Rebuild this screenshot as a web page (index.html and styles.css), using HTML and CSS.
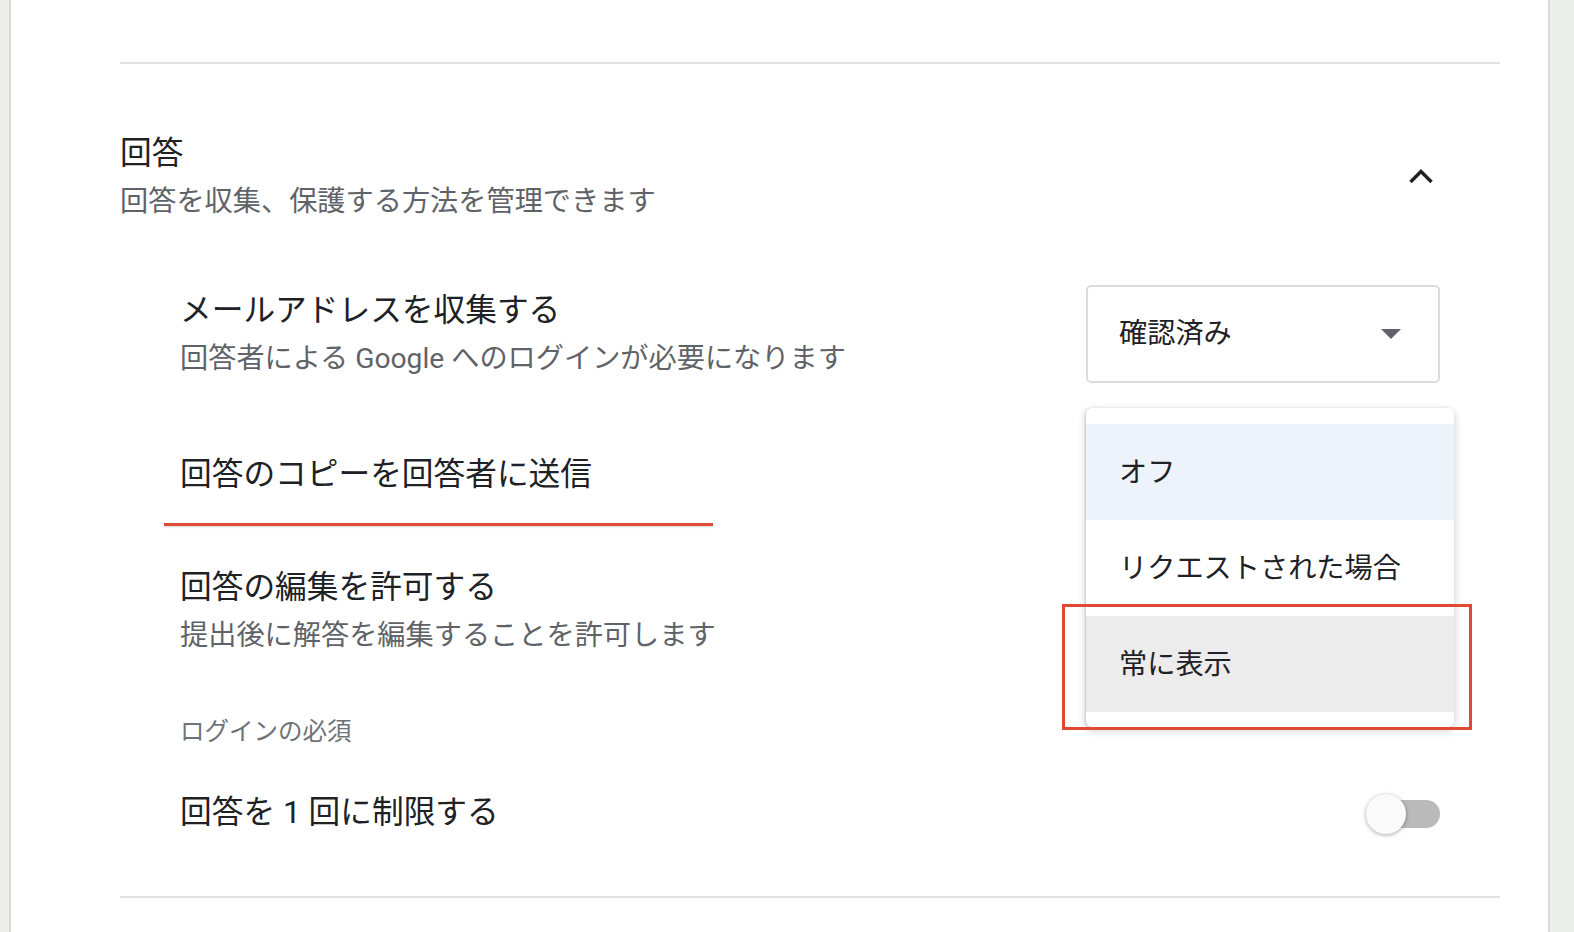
FILE: index.html
```html
<!DOCTYPE html>
<html lang="ja">
<head>
<meta charset="utf-8">
<title>回答</title>
<link rel="stylesheet" href="styles.css">
</head>
<body>
<div class="page">
  <main class="card">
    <div class="divider"></div>
    <section class="section">
      <header class="section-head">
        <div class="head-text">
          <div class="section-title">回答</div>
          <div class="section-sub">回答を収集、保護する方法を管理できます</div>
        </div>
        <svg class="chevron" width="26" height="18" viewBox="0 0 26 18" aria-hidden="true">
          <polyline points="2.5,15 13,4.5 23.5,15" fill="none" stroke="#202124" stroke-width="3.4"/>
        </svg>
      </header>

      <div class="items">
        <div class="item item-email">
          <div class="item-text">
            <div class="item-title">メールアドレスを収集する</div>
            <div class="item-sub">回答者による Google へのログインが必要になります</div>
          </div>
          <div class="select">
            <span class="select-value">確認済み</span>
            <svg class="select-arrow" width="20" height="10" viewBox="0 0 20 10" aria-hidden="true">
              <polygon points="0,0 20,0 10,10" fill="#5f6368"/>
            </svg>
          </div>
        </div>

        <div class="item item-copy">
          <div class="item-text">
            <div class="item-title">回答のコピーを回答者に送信</div>
          </div>
        </div>

        <div class="item item-edit">
          <div class="item-text">
            <div class="item-title">回答の編集を許可する</div>
            <div class="item-sub">提出後に解答を編集することを許可します</div>
          </div>
        </div>

        <div class="group-label">ログインの必須</div>

        <div class="item item-limit">
          <div class="item-text">
            <div class="item-title">回答を 1 回に制限する</div>
          </div>
          <div class="toggle">
            <span class="toggle-track"></span>
            <span class="toggle-thumb"></span>
          </div>
        </div>
      </div>
    </section>
    <div class="divider"></div>

    <div class="menu">
      <div class="menu-item is-hover">オフ</div>
      <div class="menu-item">リクエストされた場合</div>
      <div class="menu-item is-active">常に表示</div>
    </div>
    <div class="annot-underline"></div>
    <div class="annot-box"></div>
  </main>
</div>
</body>
</html>
```
FILE: styles.css
```css
* { box-sizing: border-box; }

html, body {
  margin: 0;
  padding: 0;
}

body {
  background: #eceeea;
  font-family: Roboto, "Noto Sans CJK JP", sans-serif;
  color: #202124;
  height: 932px;
  overflow: hidden;
}

.page {
  padding-left: 9px;
  height: 932px;
}

.card {
  position: relative;
  width: 1541px;
  height: 932px;
  background: #ffffff;
  border-left: 2px solid #d9dbd7;
  border-right: 2px solid #d9dbd7;
  padding: 62px 48px 0 109px;
}

.divider {
  height: 2px;
  background: #e2e2e2;
}

.section-head {
  display: flex;
  align-items: center;
  justify-content: space-between;
  margin-top: 64px;
}

.head-text {
  padding-top: 2px;
}

.section-title {
  font-size: 31.7px;
  line-height: 48px;
  color: #202124;
}

.section-sub {
  font-size: 28.2px;
  line-height: 48px;
  color: #5f6368;
}

.chevron {
  margin-right: 66px;
  margin-bottom: 2px;
  display: block;
}

.items {
  padding-left: 60px;
  padding-right: 60px;
  display: flex;
  flex-direction: column;
}

.item {
  display: flex;
  align-items: center;
  justify-content: space-between;
}

.item-text {
  padding-top: 2px;
}

.item-title {
  font-size: 31.7px;
  line-height: 48px;
  color: #202124;
}

.item-sub {
  font-size: 28.2px;
  line-height: 48px;
  color: #5f6368;
}

.item-email { margin-top: 59px; }
.item-copy { margin-top: 66px; }
.item-edit { margin-top: 63px; }
.item-limit { margin-top: 37px; margin-bottom: 59px; }

.group-label {
  margin-top: 54px;
  font-size: 24.5px;
  line-height: 36px;
  color: #6f7378;
}

.select {
  width: 354px;
  height: 98px;
  border: 2px solid #dadce0;
  border-radius: 5px;
  display: flex;
  align-items: center;
  justify-content: space-between;
  padding: 0 37px 0 31px;
}

.select-value {
  font-size: 28.2px;
  color: #202124;
  padding-bottom: 8px;
}

.select-arrow { display: block; }

.toggle {
  position: relative;
  width: 74px;
  height: 40px;
  margin-top: 4px;
}

.toggle-track {
  position: absolute;
  left: 14px;
  top: 6px;
  width: 60px;
  height: 28px;
  border-radius: 14px;
  background: #bababa;
}

.toggle-thumb {
  position: absolute;
  left: 0;
  top: 0;
  width: 40px;
  height: 40px;
  border-radius: 50%;
  background: #fafafa;
  box-shadow: 0 1px 4px rgba(0, 0, 0, 0.35);
}

/* Dropdown menu overlay */
.menu {
  position: absolute;
  left: 1075px;
  top: 408px;
  width: 368px;
  padding: 16px 0 15px;
  background: #ffffff;
  border-radius: 6px;
  box-shadow: 0 3px 8px rgba(0, 0, 0, 0.22), -1px 0 2px rgba(0, 0, 0, 0.12);
}

.menu-item {
  height: 96px;
  display: flex;
  align-items: center;
  padding-left: 33px;
  padding-bottom: 6px;
  font-size: 28.2px;
  color: #202124;
}

.menu-item.is-hover { background: #eef2fa; }
.menu-item.is-active { background: #ececec; }

/* Annotations */
.annot-underline {
  position: absolute;
  left: 153px;
  top: 523px;
  width: 549px;
  height: 3px;
  background: #e04a32;
  box-shadow: 0 1px 2px rgba(0, 0, 0, 0.15);
}

.annot-box {
  position: absolute;
  left: 1051px;
  top: 604px;
  width: 410px;
  height: 126px;
  border: 3px solid #e04a32;
}
```
